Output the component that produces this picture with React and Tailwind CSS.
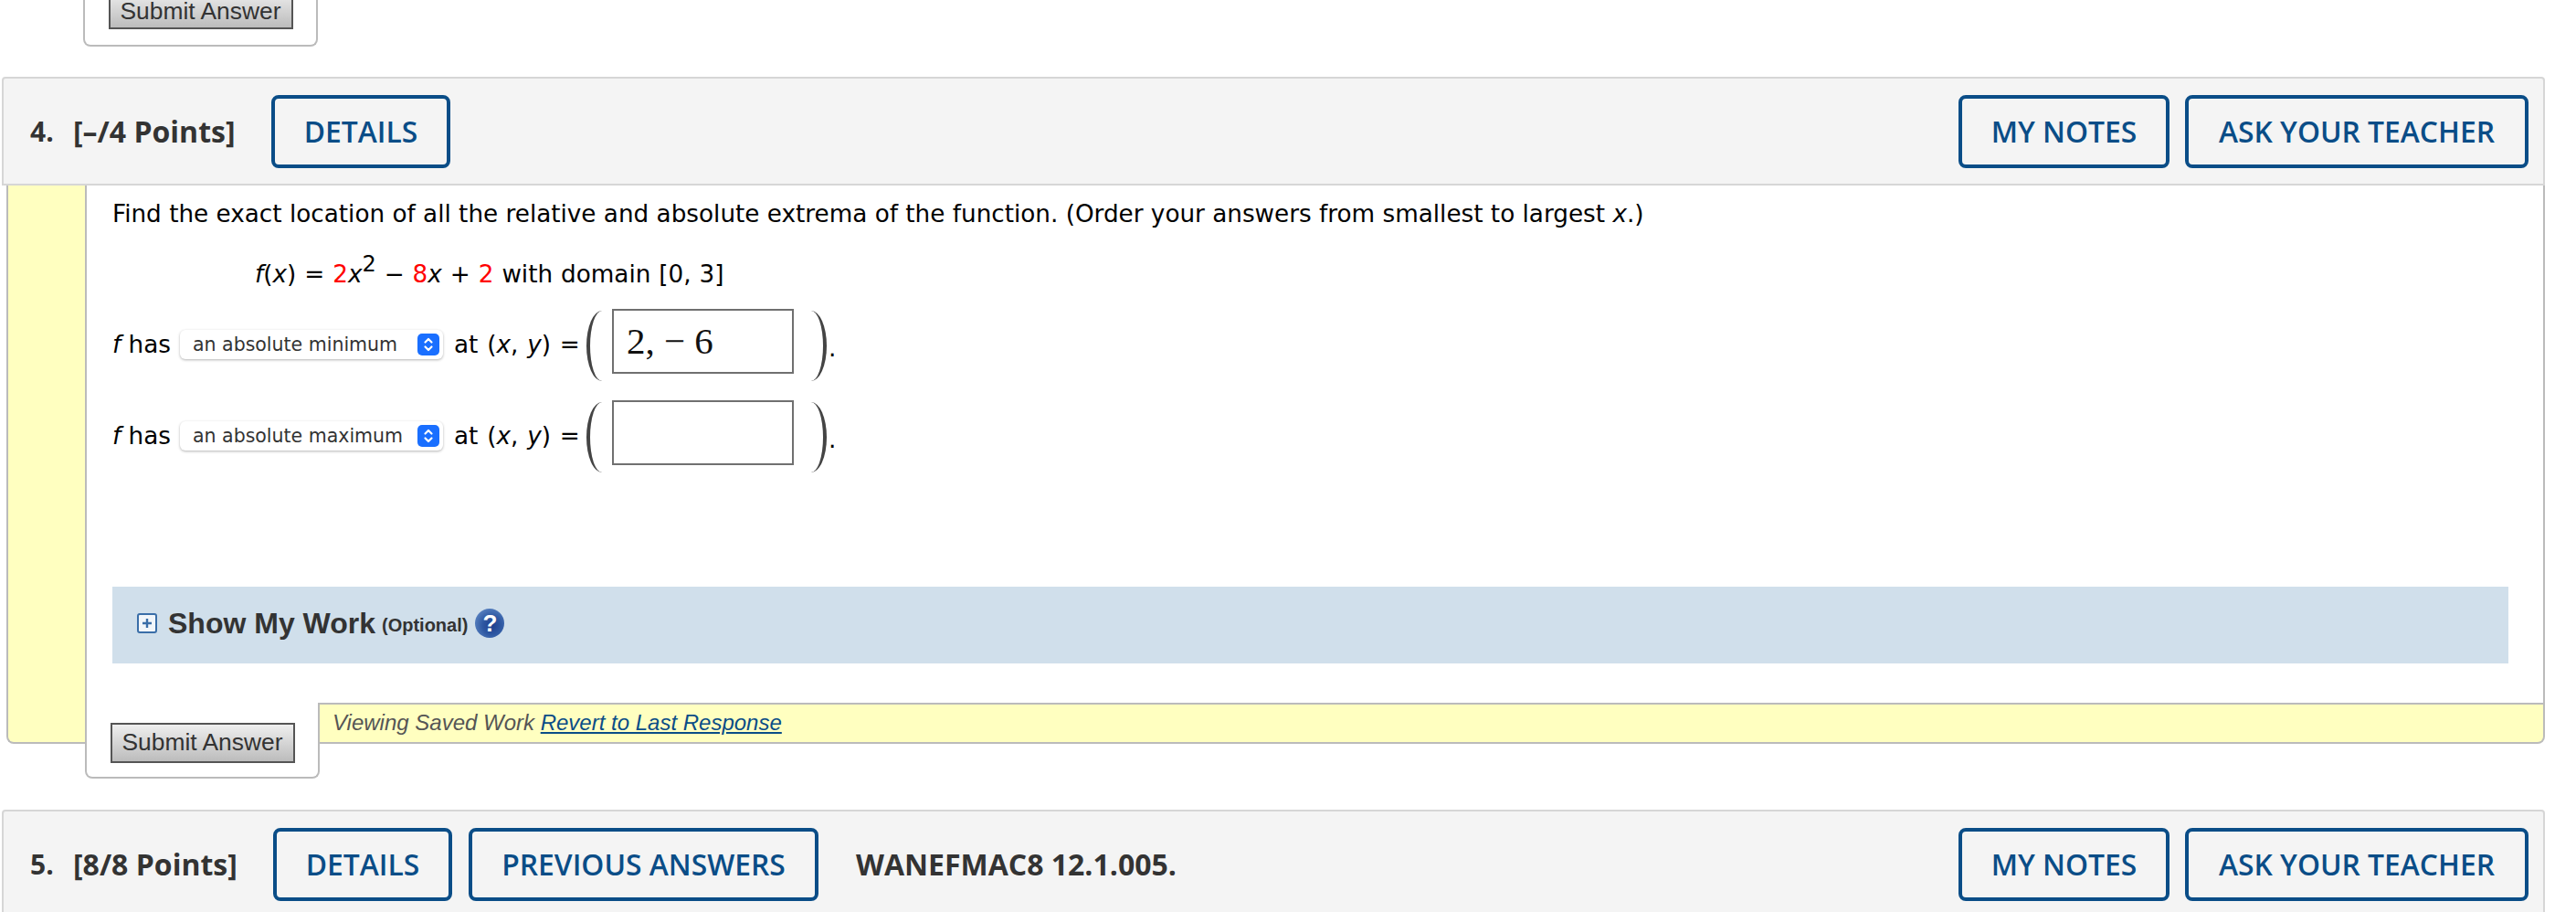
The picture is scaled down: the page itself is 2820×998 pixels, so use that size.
import React from 'react';

const bodyFont = "[font-family:'DejaVu_Sans',sans-serif]";
const headFont = "[font-family:'Open_Sans',sans-serif]";

// tombol biru di header soal
const OutlineButton = ({ width, children }) => (
    <button className={`${width} h-[80px] shrink-0 rounded-[8px] border-[4px] border-[#0a4d87] text-[31.8px] font-semibold text-[#0a4d87] [font-family:'Open_Sans',sans-serif]`}>
        {children}
    </button>
);

const SubmitButton = ({ offset }) => (
    <button className={`${offset} h-[44px] w-[202px] shrink-0 border-2 border-[#555] bg-gradient-to-b from-[#efefef] to-[#bcbcbc] text-[26.4px] leading-[22px] text-[#333] [font-family:'Liberation_Sans',sans-serif]`}>
        Submit Answer
    </button>
);

const QuestionHeader = ({ number, points, labelWidth, children }) => (
    <div className={`ml-[2px] flex h-[119px] w-[2784px] items-center rounded-t-[4px] border-2 border-[#d6d6d6] bg-[#f4f4f4] pl-[29px] pr-[16px] text-[#333] ${headFont}`}>
        <span className="w-[47px] text-[30px] font-bold">{number}</span>
        <span className={`${labelWidth} text-[32px] font-bold`}>{points}</span>
        {children}
        <div className="ml-auto flex gap-[17px]">
            <OutlineButton width="w-[231px]">MY NOTES</OutlineButton>
            <OutlineButton width="w-[376px]">ASK YOUR TEACHER</OutlineButton>
        </div>
    </div>
);

const Var = ({ children }) => <i>{children}</i>;

const SelectBox = ({ label }) => (
    <div className="mx-[10px] flex h-[32px] w-[288px] shrink-0 items-center justify-between rounded-[6px] bg-white pl-[14px] pr-[4px] shadow-[0_1px_3px_rgba(0,0,0,0.3)]">
        <span className="whitespace-nowrap text-[20.5px] text-[#333]">{label}</span>
        <span className="flex h-[24px] w-[24px] items-center justify-center rounded-[5px] bg-[#1a6fff]">
            <svg width="12" height="18" viewBox="0 0 12 18" fill="none" stroke="white" strokeWidth="2.2" strokeLinecap="round" strokeLinejoin="round">
                <path d="M2.5 6.5 L6 3 L9.5 6.5" />
                <path d="M2.5 11.5 L6 15 L9.5 11.5" />
            </svg>
        </span>
    </div>
);

const AnswerRow = ({ label, value }) => (
    <div className="flex h-[79px] items-start text-[26.25px] text-black">
        <div className="flex h-[78px] items-center">
            <span className="mt-[2px] whitespace-nowrap"><Var>f</Var> has</span>
            <SelectBox label={label} />
            <span className="mt-[2px] ml-[2px] w-[145px] whitespace-nowrap [word-spacing:1.5px]">at (<Var>x</Var>, <Var>y</Var>) =</span>
        </div>
        <div className="mt-[2px] h-[77px] w-[17px] rounded-[100%_0_0_100%/50%_0_0_50%] border-l-[4px] border-[#444]" />
        <div className="ml-[11px] flex h-[71px] w-[199px] items-center border-2 border-[#707070] pl-[14px] text-[41px] text-[#111] [font-family:'Liberation_Serif',serif]">
            {value}
        </div>
        <div className="ml-[19px] mt-[2px] h-[77px] w-[17px] rounded-[0_100%_100%_0/0_50%_50%_0] border-r-[4px] border-[#444]" />
        <span className="mt-[24px] ml-[2px]">.</span>
    </div>
);

const App = () => (
    <div className="relative h-[998px] w-[2820px] overflow-hidden bg-white">
        <div className="ml-[91px] flex h-[51px] w-[257px] items-end justify-center rounded-b-[8px] border-2 border-t-0 border-[#bbb] pb-[17px]">
            <SubmitButton offset="pt-[3px]" />
        </div>

        <div className="mt-[33px]">
            <QuestionHeader number="4." points="[–/4 Points]" labelWidth="w-[217px]">
                <OutlineButton width="w-[196px]">DETAILS</OutlineButton>
            </QuestionHeader>

            <div className={`ml-[7px] flex items-start ${bodyFont}`}>
                {/* strip kuning kiri */}
                <div className="h-[611px] w-[86px] shrink-0 rounded-bl-[8px] border-b-2 border-l-2 border-[#bbb] bg-[#ffffc0]" />

                <div className="w-[2693px]">
                    <div className="h-[566px] border-x-2 border-[#bbb] pl-[28px] pr-[38px] text-black">
                        <p className="pt-[15px] text-[26.25px] leading-[32px]">
                            Find the exact location of all the relative and absolute extrema of the function. (Order your answers from smallest to largest <Var>x</Var>.)
                        </p>
                        <p className="mt-[34px] pl-[156px] text-[26.25px] leading-[32px] [word-spacing:0.6px]">
                            <Var>f</Var>(<Var>x</Var>) = <span className="text-[#ff0000]">2</span><Var>x</Var><sup className="text-[24px]">2</sup> − <span className="text-[#ff0000]">8</span><Var>x</Var> + <span className="text-[#ff0000]">2</span> with domain [0, 3]
                        </p>
                        <div className="mt-[22px] flex flex-col gap-[21px]">
                            <AnswerRow label="an absolute minimum" value="2, − 6" />
                            <AnswerRow label="an absolute maximum" value="" />
                        </div>
                        <div className="mt-[125px] flex h-[84px] items-center bg-[#d0dfeb] pb-[5px] pl-[27px] text-[#333] [font-family:'Liberation_Sans',sans-serif]">
                            <span className="flex h-[22px] w-[22px] items-center justify-center rounded-[3px] border-2 border-[#3a6ea8] bg-[#f2f6fa]">
                                <svg width="12" height="12" viewBox="0 0 12 12" stroke="#3a6ea8" strokeWidth="2.4">
                                    <path d="M6 1 V11 M1 6 H11" />
                                </svg>
                            </span>
                            <span className="ml-[12px] text-[32px] font-bold">Show My Work</span>
                            <span className="ml-[7px] mt-[5px] text-[20px] font-bold">(Optional)</span>
                            <span className="ml-[8px] flex h-[32px] w-[32px] items-center justify-center rounded-full bg-[radial-gradient(circle_at_58%_58%,#1e3f8e,#2f59a3_40%,#4f79ba_70%,#86a5d4_98%)] text-[26px] font-bold leading-none text-white">?</span>
                        </div>
                    </div>

                    <div className="flex items-start [font-family:'Liberation_Sans',sans-serif]">
                        <div className="flex h-[83px] w-[257px] shrink-0 justify-center rounded-b-[8px] border-x-2 border-b-2 border-[#bbb] bg-white pt-[22px]">
                            <SubmitButton offset="pb-[3px]" />
                        </div>
                        <div className="flex h-[45px] flex-1 items-center rounded-br-[8px] border-y-2 border-r-2 border-[#bbb] bg-[#ffffc0] pb-[2px] pl-[14px] text-[24px] italic text-[#555]">
                            Viewing Saved Work&nbsp;<a className="text-[#0a4d87] underline">Revert to Last Response</a>
                        </div>
                    </div>
                </div>
            </div>
        </div>

        <div className="mt-[34px]">
            <QuestionHeader number="5." points="[8/8 Points]" labelWidth="w-[219px]">
                <OutlineButton width="w-[196px]">DETAILS</OutlineButton>
                <div className="ml-[18px]">
                    <OutlineButton width="w-[383px]">PREVIOUS ANSWERS</OutlineButton>
                </div>
                <span className="ml-[41px] text-[32px] font-bold">WANEFMAC8 12.1.005.</span>
            </QuestionHeader>
        </div>
    </div>
);

export default App;
